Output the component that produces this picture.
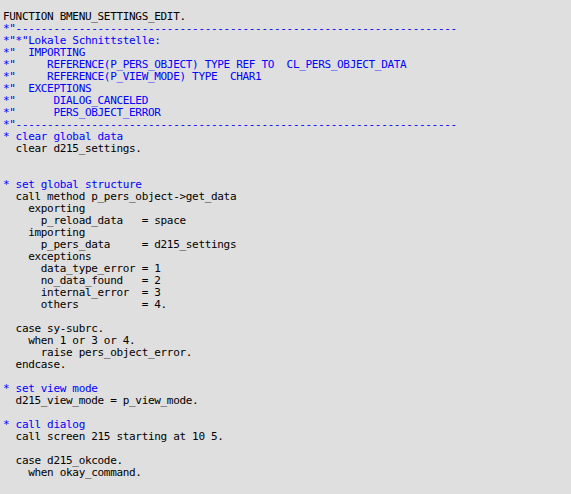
const dash = '*"' + "-".repeat(70)

type Line = { text: string; comment?: boolean }

const lines: Line[] = [
  { text: "FUNCTION BMENU_SETTINGS_EDIT." },
  { text: dash, comment: true },
  { text: '*"*"Lokale Schnittstelle:', comment: true },
  { text: '*"  IMPORTING', comment: true },
  { text: '*"     REFERENCE(P_PERS_OBJECT) TYPE REF TO  CL_PERS_OBJECT_DATA', comment: true },
  { text: '*"     REFERENCE(P_VIEW_MODE) TYPE  CHAR1', comment: true },
  { text: '*"  EXCEPTIONS', comment: true },
  { text: '*"      DIALOG_CANCELED', comment: true },
  { text: '*"      PERS_OBJECT_ERROR', comment: true },
  { text: dash, comment: true },
  { text: "* clear global data", comment: true },
  { text: "  clear d215_settings." },
  { text: "" },
  { text: "" },
  { text: "* set global structure", comment: true },
  { text: "  call method p_pers_object->get_data" },
  { text: "    exporting" },
  { text: "      p_reload_data   = space" },
  { text: "    importing" },
  { text: "      p_pers_data     = d215_settings" },
  { text: "    exceptions" },
  { text: "      data_type_error = 1" },
  { text: "      no_data_found   = 2" },
  { text: "      internal_error  = 3" },
  { text: "      others          = 4." },
  { text: "" },
  { text: "  case sy-subrc." },
  { text: "    when 1 or 3 or 4." },
  { text: "      raise pers_object_error." },
  { text: "  endcase." },
  { text: "" },
  { text: "* set view mode", comment: true },
  { text: "  d215_view_mode = p_view_mode." },
  { text: "" },
  { text: "* call dialog", comment: true },
  { text: "  call screen 215 starting at 10 5." },
  { text: "" },
  { text: "  case d215_okcode." },
  { text: "    when okay_command." },
]

export default function App() {
  return (
    <div className="w-[571px] h-[494px] overflow-hidden bg-[#dfdfdf] pl-[3px] pt-[11px] font-['DejaVu_Sans_Mono',monospace] text-[11px] tracking-[-0.32px] leading-[12px]">
      {lines.map((line, i) => (
        <div
          key={i}
          className={`h-[12px] whitespace-pre ${line.comment ? "text-[#0000ff]" : "text-black"}`}
        >
          {line.text}
        </div>
      ))}
    </div>
  )
}
